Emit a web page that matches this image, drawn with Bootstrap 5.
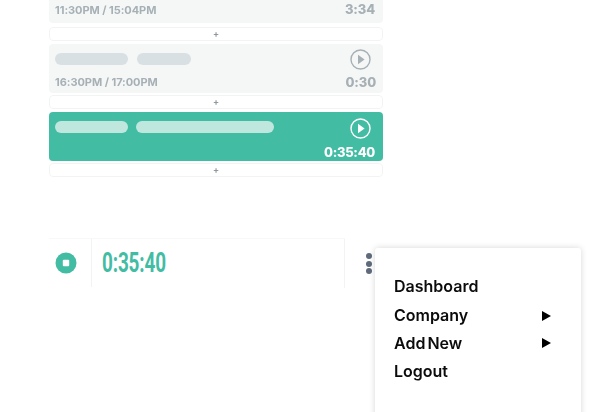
<!DOCTYPE html>
<html lang="en">
<head>
<meta charset="utf-8">
<title>Timer</title>
<link href="https://cdn.jsdelivr.net/npm/bootstrap@5.3.0/dist/css/bootstrap.min.css" rel="stylesheet">
<style>
html,body{height:412px;overflow:hidden;background:#fff}
body{font-family:Inter,"Liberation Sans",sans-serif;position:relative}
.tl-wrap{width:334px;margin-left:49px;will-change:opacity}
.tl-card{height:49px;background:#f5f7f7;border-radius:4px;padding:7px 7px 2px 6px;color:#a6b0b5;margin-bottom:2px}
.tl-first{height:23px;border-radius:0 0 4px 4px;padding:0 8px 6px 6px;margin-bottom:4px}
.tl-active{background:#43bca4;color:#fff;padding:8px 8px 0 6px}
.tl-add{height:14px;border:1px solid #f2f4f4;border-radius:4px;margin-bottom:3px;font-size:9px;line-height:12px;color:#8f9aa0;text-align:center;font-weight:700}
.tl-pill{height:12px;border-radius:6px;background:#d9e0e3;margin-top:2px}
.tl-active .tl-pill{background:#c0e7de;margin-top:1px}
.tl-p1{width:73px}.tl-p2{width:54px;margin-left:9px}
.tl-active .tl-p2{width:138px;margin-left:8px}
.tl-time{font-size:11px;font-weight:700;line-height:14px;margin-bottom:2px;letter-spacing:-.05px}
.tl-dur{font-size:13px;font-weight:800;line-height:15px;margin-bottom:1px;letter-spacing:-.15px}
.tl-active .tl-dur{letter-spacing:-.3px}
.tl-first .tl-time,.tl-first .tl-dur{margin-bottom:0}
.tl-card svg{display:block;margin:-2px 5px 0 auto}
.tl-active svg{margin-right:4px}
.tl-bar{width:296px;height:49px;margin:61px 0 0 49px;border-top:1px solid #f7f8f8}
.tl-stop{width:43px;border-right:1px solid #f2f4f4}
.tl-stopicon{margin-left:5px}
.tl-clock{color:#43bca4;font-family:Roboto,sans-serif;font-weight:700;font-size:27px;line-height:1;display:inline-block;transform:scaleX(.7);transform-origin:left center;margin-left:10px;letter-spacing:-.2px}
.tl-end{width:1px;background:#f2f4f4;height:49px}
.tl-kebab{position:absolute;left:366px;top:253px;width:6px}
.tl-kebab i{display:block;width:6px;height:6px;border-radius:50%;background:#5f6b7a;margin-bottom:1.5px}
.tl-menu{position:absolute;left:375px;top:248px;width:206px;height:180px;background:#fff;border-radius:3px;box-shadow:0 0 6px rgba(0,0,0,.16);padding:24px 30px 0 19px;font-size:16px;font-weight:600;color:#0b0b0b;letter-spacing:0;word-spacing:-2px;will-change:opacity}
.tl-menu div{line-height:28.4px}
.tl-menu .tl-m2{margin-top:1px}
.tl-menu .tl-m3{margin-top:-1px}
.tl-tri{width:0;height:0;border-left:9px solid #000;border-top:5px solid transparent;border-bottom:5px solid transparent}
</style>
</head>
<body>
<div class="tl-wrap">
  <div class="tl-card tl-first d-flex justify-content-between align-items-end">
    <span class="tl-time">11:30PM / 15:04PM</span><span class="tl-dur">3:34</span>
  </div>
  <div class="tl-add">+</div>
  <div class="tl-card d-flex justify-content-between">
    <div class="d-flex flex-column justify-content-between">
      <div class="d-flex"><div class="tl-pill tl-p1"></div><div class="tl-pill tl-p2"></div></div>
      <span class="tl-time">16:30PM / 17:00PM</span>
    </div>
    <div class="d-flex flex-column justify-content-between text-end">
      <svg width="21" height="21" viewBox="0 0 21 21"><circle cx="10.5" cy="10.5" r="9.5" fill="none" stroke="#a6b0b5" stroke-width="1.4"/><path d="M8 5.8l6.6 4.7L8 15.2z" fill="#a6b0b5"/></svg>
      <span class="tl-dur">0:30</span>
    </div>
  </div>
  <div class="tl-add">+</div>
  <div class="tl-card tl-active d-flex justify-content-between">
    <div class="d-flex"><div class="tl-pill tl-p1"></div><div class="tl-pill tl-p2"></div></div>
    <div class="d-flex flex-column justify-content-between text-end">
      <svg width="21" height="21" viewBox="0 0 21 21"><circle cx="10.5" cy="10.5" r="9.5" fill="none" stroke="#fff" stroke-width="1.4"/><path d="M8 5.8l6.6 4.7L8 15.2z" fill="#fff"/></svg>
      <span class="tl-dur">0:35:40</span>
    </div>
  </div>
  <div class="tl-add">+</div>
</div>
<div class="tl-bar d-flex align-items-center">
  <div class="tl-stop h-100 d-flex align-items-center">
    <svg class="tl-stopicon" width="24" height="24" viewBox="0 0 24 24"><circle cx="12" cy="12" r="10.5" fill="#43bca4"/><rect x="8.8" y="8.8" width="6.4" height="6.4" rx="1" fill="#fff"/></svg>
  </div>
  <span class="tl-clock flex-grow-1">0:35:40</span>
  <div class="tl-end"></div>
</div>
<div class="tl-kebab"><i></i><i></i><i></i></div>
<div class="tl-menu">
  <div>Dashboard</div>
  <div class="tl-m2 d-flex justify-content-between align-items-center">Company<span class="tl-tri"></span></div>
  <div class="tl-m3 d-flex justify-content-between align-items-center">Add New<span class="tl-tri"></span></div>
  <div>Logout</div>
</div>
<script src="https://cdn.jsdelivr.net/npm/bootstrap@5.3.0/dist/js/bootstrap.bundle.min.js"></script>
</body>
</html>
